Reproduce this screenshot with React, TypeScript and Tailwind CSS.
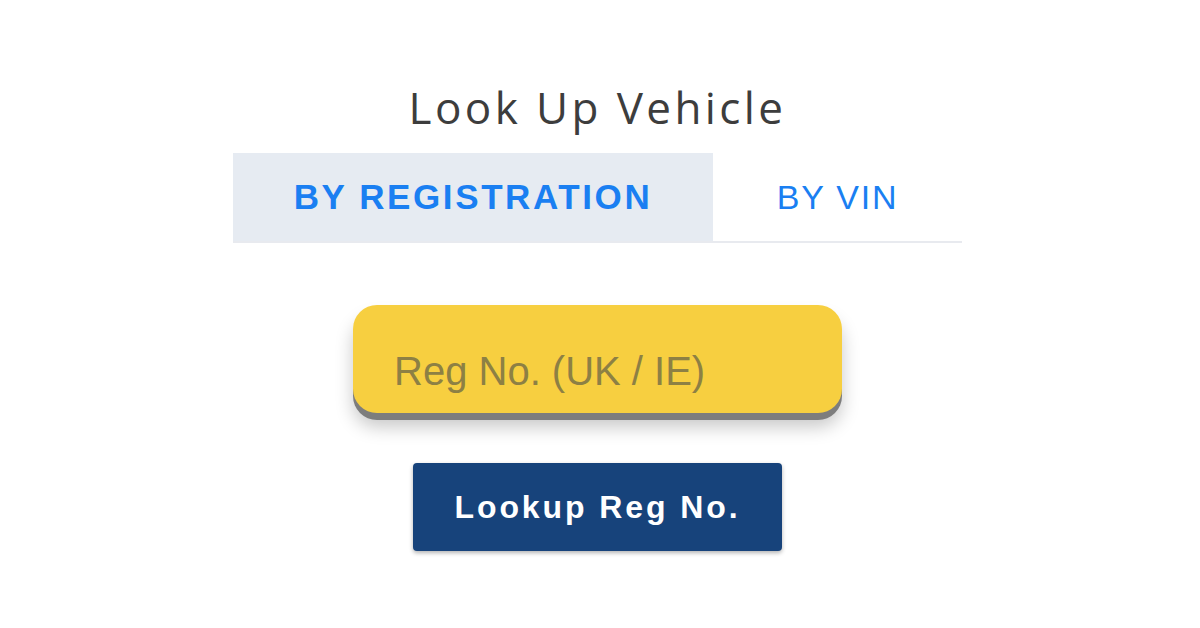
import { useState } from "react";

const App = () => {
  const [tab, setTab] = useState<"reg" | "vin">("reg");

  return (
    <div className="w-[1200px] h-[628px] bg-white flex flex-col items-center pr-[5px] font-['Liberation_Sans',Arial,sans-serif]">
      <h1 className="mt-[79px] text-[44px] leading-[56px] font-normal text-[#3d3d3d] font-['Open_Sans','Noto_Sans',sans-serif] tracking-[3.4px]">
        Look Up Vehicle
      </h1>

      <div className="mt-[18px] w-[729px] flex border-b-2 border-[#e8eaef]">
        <button
          onClick={() => setTab("reg")}
          className={`w-[480px] h-[88px] flex items-center justify-center text-[35px] tracking-[2.6px] text-[#1a7ff2] ${
            tab === "reg" ? "bg-[#e6ebf2] font-bold" : "bg-white"
          }`}
        >
          BY REGISTRATION
        </button>
        <button
          onClick={() => setTab("vin")}
          className={`flex-1 h-[88px] flex items-center justify-center text-[34px] tracking-[1.8px] text-[#1a7ff2] ${
            tab === "vin" ? "bg-[#e6ebf2] font-bold" : "bg-white"
          }`}
        >
          BY VIN
        </button>
      </div>

      <input
        placeholder="Reg No. (UK / IE)"
        className="mt-[62px] w-[489px] h-[108px] rounded-[24px] bg-[#f7cf40] px-[41px] pt-[25px] text-[40px] text-[#5a4a10] placeholder:text-[#8d8044] outline-none shadow-[0_7px_0_#7d7d7d,0_14px_18px_rgba(0,0,0,0.22)]"
      />

      <button className="mt-[50px] w-[369px] h-[88px] rounded-[4px] bg-[#17437b] text-white text-[32px] font-bold tracking-[2.9px] shadow-[0_2px_4px_rgba(0,0,0,0.3)]">
        Lookup Reg No.
      </button>
    </div>
  );
};

export default App;
